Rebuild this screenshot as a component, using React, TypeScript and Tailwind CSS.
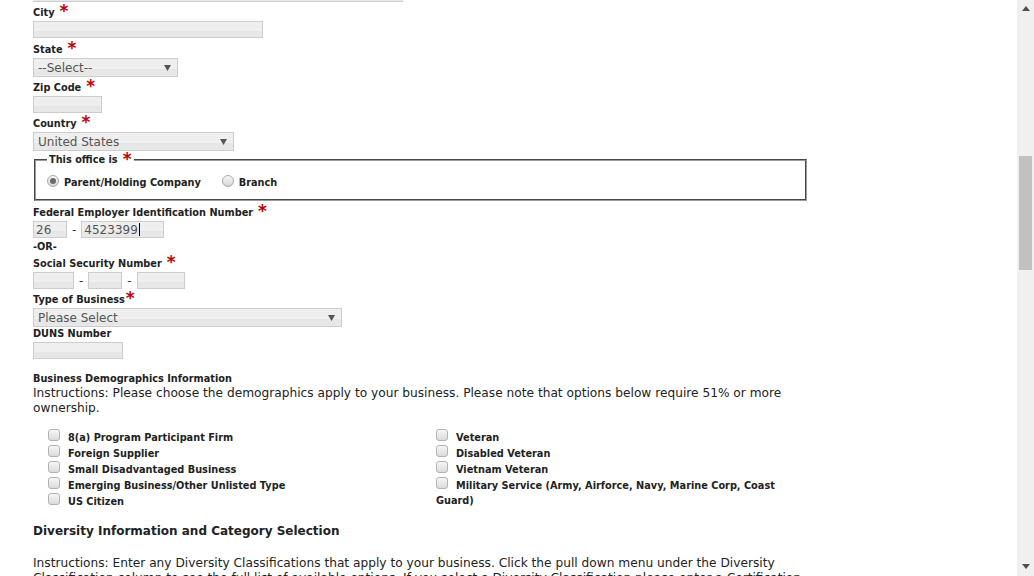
import type { ReactNode } from 'react';

const field_bg =
  'border border-[#cdcdcd] bg-[linear-gradient(#efefef_0%,#eeeeee_45%,#f3f3f3_55%,#e6e6e6_60%,#e8e8e8_100%)]';

function Star({ tight = false }: { tight?: boolean }) {
  return (
    <span
      className={`${tight ? 'ml-[1px]' : 'ml-[5px]'} self-start text-[17px] leading-[12px] font-bold text-[#c00000]`}
    >
      *
    </span>
  );
}

function Label({ children, className = 'h-[16px]' }: { children: ReactNode; className?: string }) {
  return (
    <div className={`flex items-center text-[9.75px] font-bold whitespace-nowrap text-[#222] ${className}`}>{children}</div>
  );
}

function TextBox({ width, value, caret = false }: { width: string; value?: string; caret?: boolean }) {
  return (
    <div className={`${field_bg} ${width} flex h-[17px] items-center pl-[2px] text-[12px] text-[#555]`}>
      {value}
      {caret ? <span className="ml-[1px] h-[13px] w-px bg-black" /> : null}
    </div>
  );
}

function SelectBox({ width, value }: { width: string; value: string }) {
  return (
    <div className={`${field_bg} ${width} flex h-[19px] items-center justify-between pr-[6px] pl-[4px] text-[12px] text-[#555]`}>
      <span>{value}</span>
      <svg width="7" height="6" viewBox="0 0 7 6">
        <polygon points="0,0 7,0 3.5,6" fill="#555" />
      </svg>
    </div>
  );
}

function Radio({ checked }: { checked?: boolean }) {
  return (
    <span className="mb-[4px] flex h-[12px] w-[12px] items-center justify-center rounded-full border border-[#a9a9a9] bg-[linear-gradient(#f6f6f6,#d8d8d8)]">
      {checked ? <span className="h-[6px] w-[6px] rounded-full bg-[#6a6a6a]" /> : null}
    </span>
  );
}

function CheckBox() {
  return (
    <span className="mb-[6px] h-[12px] w-[12px] shrink-0 rounded-[3px] border border-[#b3b3b3] bg-[linear-gradient(#f7f7f7,#dadada)]" />
  );
}

function CheckRow({ children }: { children: ReactNode }) {
  return (
    <div className="flex h-[16px] items-center text-[9.75px] font-bold whitespace-nowrap text-[#222]">
      <CheckBox />
      <span className="ml-[8px]">{children}</span>
    </div>
  );
}

export default function App() {
  return (
    <div className="flex h-[576px] overflow-hidden bg-white font-['DejaVu_Sans',Verdana,sans-serif] text-[#222]">
      <main className="flex-1 pl-[33px]">
        <div className="w-[776px]">
          <div className="h-[2px] w-[370px] border-b border-[#cdcdcd] bg-[#e8e8e8]" />

          <Label className="mt-[3px] h-[16px]">
            City<Star />
          </Label>
          <TextBox width="w-[230px]" />

          <Label className="mt-[4px] h-[16px]">
            State<Star />
          </Label>
          <SelectBox width="w-[145px]" value="--Select--" />

          <Label className="mt-[3px] h-[16px]">
            Zip Code<Star />
          </Label>
          <TextBox width="w-[69px]" />

          <Label className="mt-[3px] h-[16px]">
            Country<Star />
          </Label>
          <SelectBox width="w-[201px]" value="United States" />

          <fieldset className="mt-[2px] mr-[2px] ml-[1px] border-2 border-[#9a9a9a] pt-[8px] pb-[8px] pl-[11px] [border-style:groove]">
            <legend className="px-[2px]">
              <span className="flex h-[14px] items-center text-[9.75px] font-bold">
                This office is<Star />
              </span>
            </legend>
            <div className="flex h-[16px] items-center text-[9.75px] font-bold">
              <Radio checked />
              <span className="ml-[5px]">Parent/Holding Company</span>
              <span className="ml-[21px]">
                <Radio />
              </span>
              <span className="ml-[5px]">Branch</span>
            </div>
          </fieldset>

          <Label className="mt-[4px] h-[16px]">
            Federal Employer Identification Number<Star />
          </Label>
          <div className="flex h-[17px] items-center gap-[5px] text-[12px] text-[#333]">
            <TextBox width="w-[34px]" value="26" />
            <span>-</span>
            <TextBox width="w-[83px]" value="4523399" caret />
          </div>
          <div className="text-[9.75px] leading-[18px] font-bold">-OR-</div>

          <Label>
            Social Security Number<Star />
          </Label>
          <div className="flex h-[17px] items-center gap-[5px] text-[12px] text-[#333]">
            <TextBox width="w-[41px]" />
            <span>-</span>
            <TextBox width="w-[34px]" />
            <span>-</span>
            <TextBox width="w-[48px]" />
          </div>

          <Label className="mt-[3px] h-[16px]">
            Type of Business
            <Star tight />
          </Label>
          <SelectBox width="w-[309px]" value="Please Select" />

          <Label className="h-[15px]">DUNS Number</Label>
          <TextBox width="w-[90px]" />

          <div className="mt-[13px] text-[9.75px] leading-[14px] font-bold">Business Demographics Information</div>
          <p className="text-[12.2px] leading-[15px] text-[#222]">
            Instructions: Please choose the demographics apply to your business. Please note that options below require 51% or more
            <br />
            ownership.
          </p>

          <div className="mt-[14px] flex">
            <div className="w-[403px] pl-[15px]">
              <CheckRow>8(a) Program Participant Firm</CheckRow>
              <CheckRow>Foreign Supplier</CheckRow>
              <CheckRow>Small Disadvantaged Business</CheckRow>
              <CheckRow>Emerging Business/Other Unlisted Type</CheckRow>
              <CheckRow>US Citizen</CheckRow>
            </div>
            <div className="w-[360px]">
              <CheckRow>Veteran</CheckRow>
              <CheckRow>Disabled Veteran</CheckRow>
              <CheckRow>Vietnam Veteran</CheckRow>
              <CheckRow>Military Service (Army, Airforce, Navy, Marine Corp, Coast</CheckRow>
              <div className="text-[9.75px] leading-[14px] font-bold">Guard)</div>
            </div>
          </div>

          <h2 className="mt-[12px] text-[12px] leading-[18px] font-bold text-[#222]">
            Diversity Information and Category Selection
          </h2>
          <p className="mt-[16px] text-[12.2px] leading-[15px]">
            Instructions: Enter any Diversity Classifications that apply to your business. Click the pull down menu under the Diversity
            <br />
            Classification column to see the full list of available options. If you select a Diversity Classification please enter a Certification
          </p>
        </div>
      </main>

      <aside className="flex w-[17px] flex-col items-center bg-[#f0f0f0]">
        <svg className="mt-[6px]" width="8" height="5" viewBox="0 0 8 5">
          <polygon points="4,0 8,5 0,5" fill="#505050" />
        </svg>
        <div className="mt-[145px] h-[114px] w-[13px] bg-[#c1c1c1]" />
        <div className="flex-1" />
        <svg className="mb-[7px]" width="8" height="5" viewBox="0 0 8 5">
          <polygon points="0,0 8,0 4,5" fill="#505050" />
        </svg>
      </aside>
    </div>
  );
}
